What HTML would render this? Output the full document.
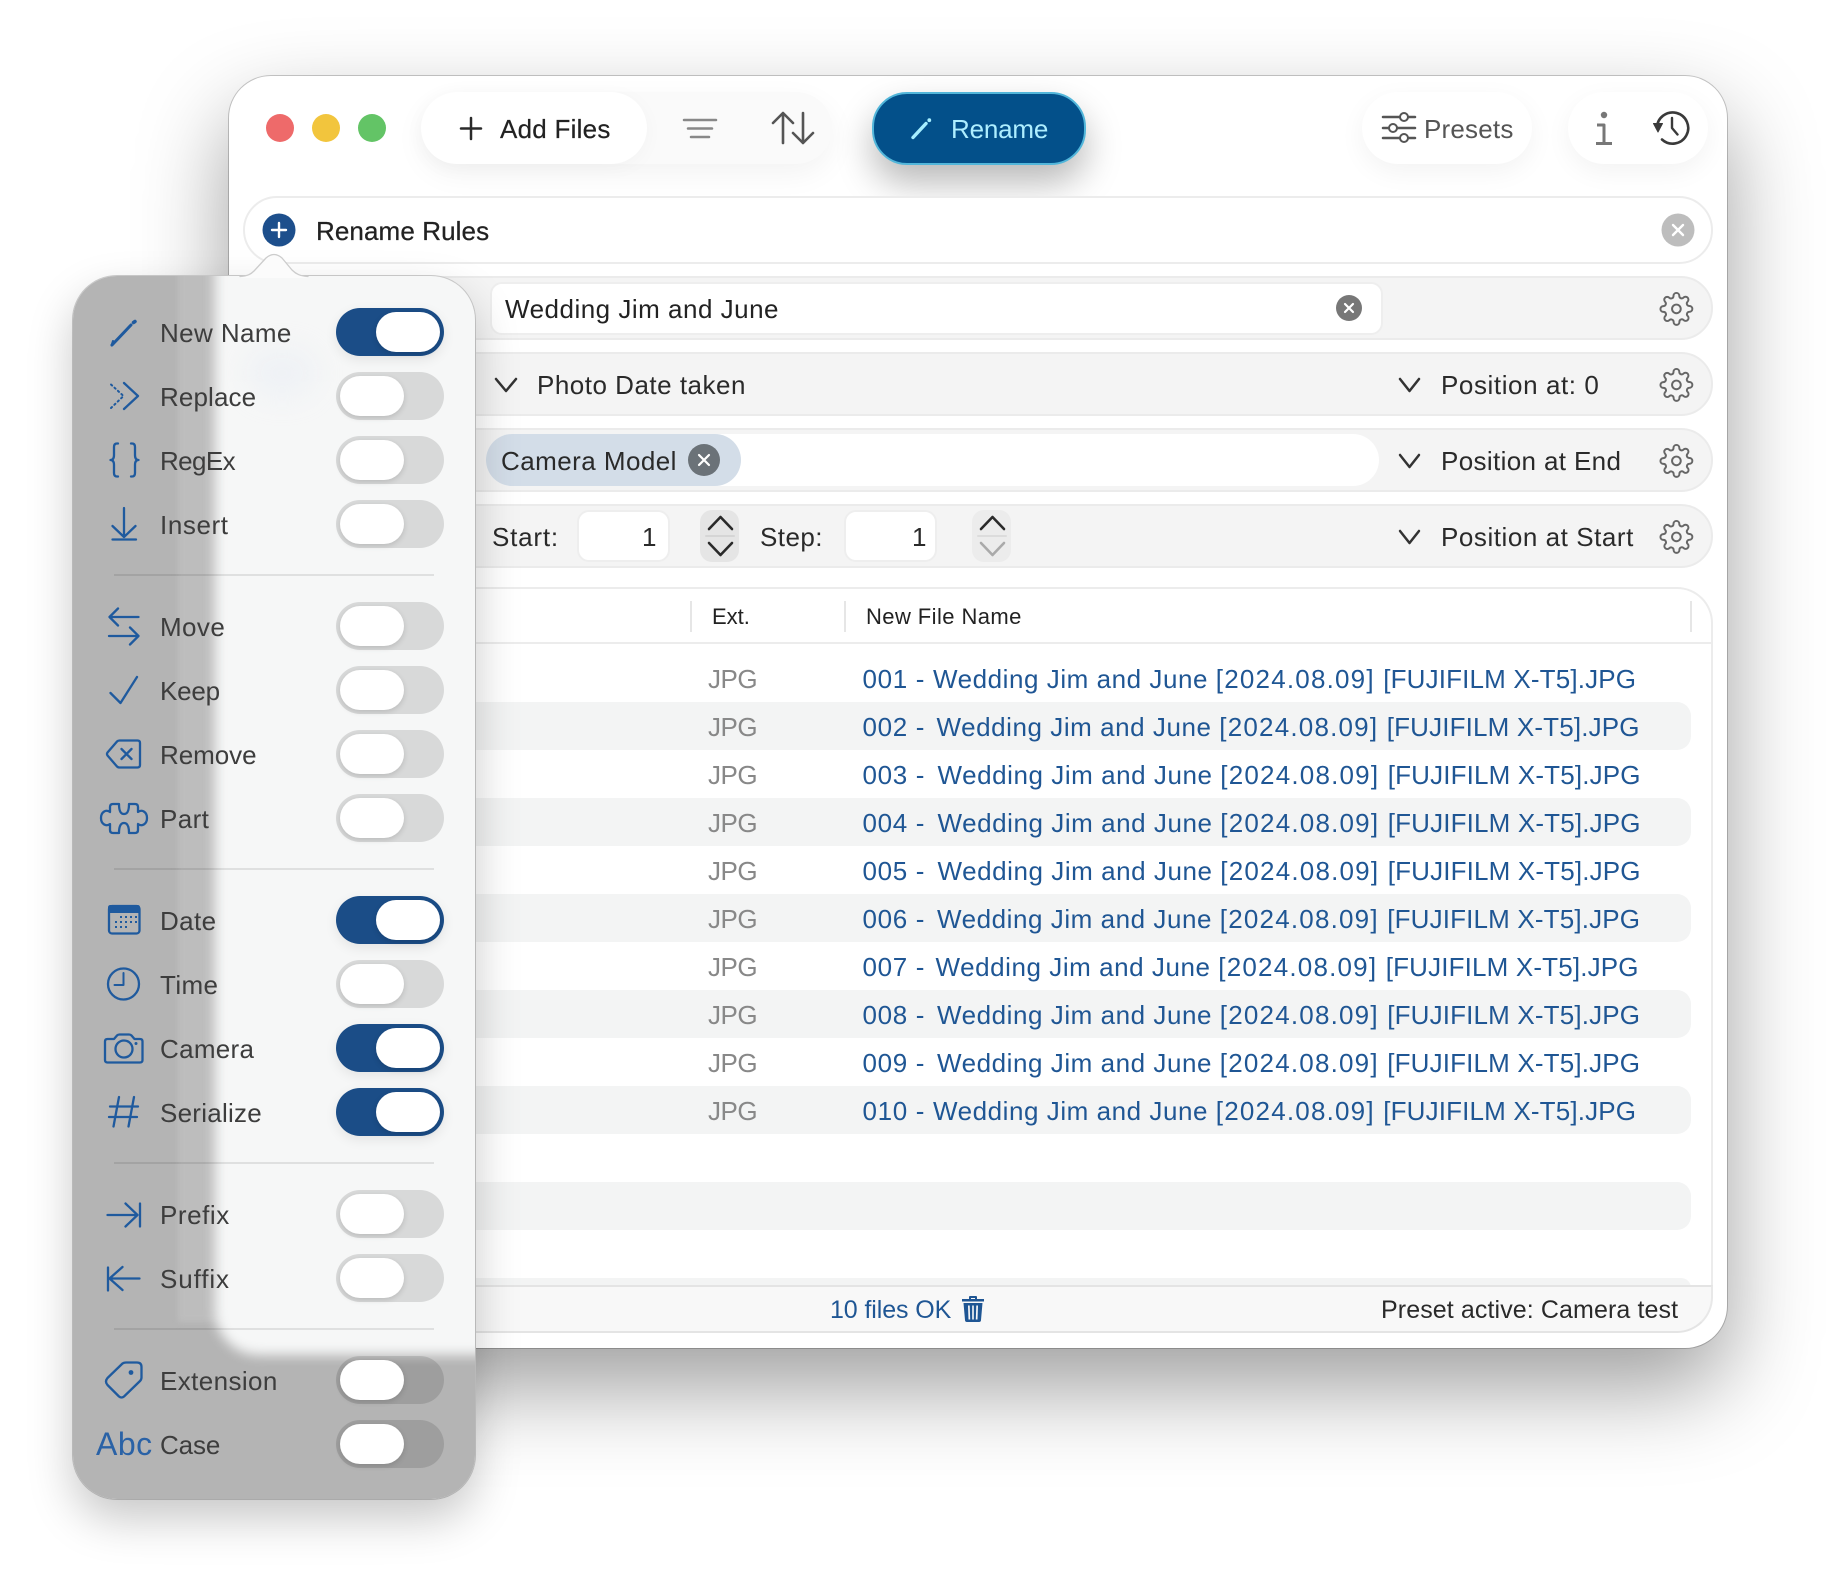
<!DOCTYPE html>
<html><head><meta charset="utf-8"><title>Rename</title>
<style>
html,body{margin:0;padding:0;background:#fff}
#p{position:relative;width:1840px;height:1580px;overflow:hidden;background:#fff;font-family:"Liberation Sans",sans-serif;font-size:26px;color:#222}
#p div,#p span.a{position:absolute}
.t{position:absolute;white-space:pre;height:40px;line-height:40px}
.row{left:243px;width:1466px;height:60px;background:#f4f4f4;border:2px solid #ebebeb;border-radius:32px}
.st{background:#f3f4f4;left:400px;width:1291px;height:48px;border-radius:14px}
.j{left:708px;color:#888;letter-spacing:-.5px}
.f{left:862.5px;color:#1f5694;letter-spacing:.66px}
.f i{font-style:normal;display:inline-block}
.f u{text-decoration:none;letter-spacing:.55px}
.f s{text-decoration:none;letter-spacing:1.2px}
.f em{font-style:normal;letter-spacing:.16px}
.lb{left:160px;color:#3d3d3d;letter-spacing:.12px}
.tg{left:336px;width:108px;height:48px;border-radius:24px;background:rgba(0,0,0,.12)}
.tg b{position:absolute;left:4px;top:4px;width:64px;height:40px;border-radius:20px;background:#fff;box-shadow:0 2px 6px rgba(0,0,0,.14)}
.tg.on{background:#1b4d87;box-shadow:0 4px 12px rgba(0,0,0,.08)}
.tg.on b{left:40px}
.sep{left:114px;width:320px;height:2px;background:rgba(0,0,0,.09)}
svg{position:absolute;left:0;top:0}
</style></head><body>
<div id="p">

<!-- window -->
<div style="left:229px;top:76px;width:1498px;height:1272px;background:#fff;border-radius:42px;box-shadow:0 0 0 1px rgba(0,0,0,.2),0 40px 90px rgba(0,0,0,.38)"></div>

<!-- toolbar -->
<div style="left:421px;top:92px;width:411px;height:72px;border-radius:36px;background:#fafafa;box-shadow:0 10px 30px rgba(0,0,0,.05)"></div>
<div style="left:421px;top:92px;width:226px;height:72px;border-radius:36px;background:#fff;box-shadow:0 4px 20px rgba(0,0,0,.03)"></div>
<div style="left:872px;top:92px;width:210px;height:69px;border-radius:35px;background:#03508a;border:2px solid #52b6da;box-shadow:0 18px 36px rgba(0,0,0,.28)"></div>
<div style="left:1362px;top:92px;width:170px;height:72px;border-radius:36px;background:#fff;box-shadow:0 8px 26px rgba(0,0,0,.05)"></div>
<div style="left:1568px;top:92px;width:140px;height:72px;border-radius:36px;background:#fff;box-shadow:0 8px 26px rgba(0,0,0,.05)"></div>

<div class="t" style="left:500px;top:109px;letter-spacing:.25px;color:#222;-webkit-text-stroke:.2px #222">Add Files</div>
<div class="t" style="left:951px;top:109px;color:#aeeeff;letter-spacing:-.2px">Rename</div>
<div class="t" style="left:1424px;top:109px;color:#555;letter-spacing:.2px">Presets</div>

<!-- rename rules bar -->
<div style="left:243px;top:196px;width:1466px;height:64px;background:#fff;border:2px solid #ececec;border-radius:34px"></div>
<div class="t" style="left:316px;top:211px;letter-spacing:.1px;color:#222;-webkit-text-stroke:.25px #222">Rename Rules</div>

<!-- rows -->
<div class="row" style="top:276px"></div>
<div class="row" style="top:352px"></div>
<div class="row" style="top:428px"></div>
<div class="row" style="top:504px"></div>

<div style="left:490px;top:282px;width:889px;height:49px;background:#fff;border:2px solid #eee;border-radius:12px"></div>
<div class="t" style="left:505px;top:289px;letter-spacing:.5px;color:#222">Wedding Jim and June</div>

<div class="t" style="left:537px;top:365px;letter-spacing:.5px;color:#2a2a2a">Photo Date taken</div>
<div class="t" style="left:1441px;top:365px;letter-spacing:.58px;color:#2a2a2a">Position at: 0</div>

<div style="left:486px;top:434px;width:893px;height:52px;background:#fff;border-radius:26px"></div>
<div style="left:486px;top:434px;width:255px;height:52px;background:#d3dde8;border-radius:26px"></div>
<div class="t" style="left:501px;top:441px;letter-spacing:.45px;color:#2a2a2a">Camera Model</div>
<div class="t" style="left:1441px;top:441px;letter-spacing:.36px;color:#2a2a2a">Position at End</div>

<div class="t" style="left:492px;top:517px;letter-spacing:.8px;color:#2a2a2a">Start:</div>
<div style="left:577px;top:510px;width:89px;height:48px;background:#fff;border:2px solid #eee;border-radius:12px"></div>
<div class="t" style="left:642px;top:517px;color:#2a2a2a">1</div>
<div style="left:700px;top:510px;width:39px;height:52px;background:#e5e5e5;border-radius:12px"></div>
<div class="t" style="left:760px;top:517px;letter-spacing:.45px;color:#2a2a2a">Step:</div>
<div style="left:844px;top:510px;width:89px;height:48px;background:#fff;border:2px solid #eee;border-radius:12px"></div>
<div class="t" style="left:912px;top:517px;color:#2a2a2a">1</div>
<div style="left:972px;top:510px;width:39px;height:52px;background:#ececec;border-radius:12px"></div>
<div class="t" style="left:1441px;top:517px;letter-spacing:.55px;color:#2a2a2a">Position at Start</div>

<!-- table -->
<div style="left:243px;top:587px;width:1466px;height:700px;background:#fff;border:2px solid #ececec;border-bottom:0;border-radius:36px 36px 0 0"></div>
<div style="left:245px;top:642px;width:1466px;height:2px;background:#ececec"></div>
<div style="left:690px;top:601px;width:2px;height:31px;background:#e6e6e6"></div>
<div style="left:844px;top:601px;width:2px;height:31px;background:#e6e6e6"></div>
<div style="left:1690px;top:601px;width:2px;height:31px;background:#e6e6e6"></div>
<div class="t" style="left:712px;top:597px;font-size:22px;color:#222">Ext.</div>
<div class="t" style="left:866px;top:597px;font-size:22px;letter-spacing:.42px;color:#222">New File Name</div>

<div class="st" style="top:702px"></div>
<div class="st" style="top:798px"></div>
<div class="st" style="top:894px"></div>
<div class="st" style="top:990px"></div>
<div class="st" style="top:1086px"></div>
<div class="st" style="top:1182px"></div>
<div class="st" style="top:1278px;height:10px;border-radius:14px 14px 0 0"></div>

<div class="t j" style="top:659px">JPG</div><div class="t f" style="top:659px"><i style="width:70.5px">001 - </i><u>Wedding Jim and June </u><s>[2024.08.09] </s><em>[FUJIFILM X-T5].JPG</em></div>
<div class="t j" style="top:707px">JPG</div><div class="t f" style="top:707px"><i style="width:74px">002 - </i><u>Wedding Jim and June </u><s>[2024.08.09] </s><em>[FUJIFILM X-T5].JPG</em></div>
<div class="t j" style="top:755px">JPG</div><div class="t f" style="top:755px"><i style="width:75px">003 - </i><u>Wedding Jim and June </u><s>[2024.08.09] </s><em>[FUJIFILM X-T5].JPG</em></div>
<div class="t j" style="top:803px">JPG</div><div class="t f" style="top:803px"><i style="width:75px">004 - </i><u>Wedding Jim and June </u><s>[2024.08.09] </s><em>[FUJIFILM X-T5].JPG</em></div>
<div class="t j" style="top:851px">JPG</div><div class="t f" style="top:851px"><i style="width:75px">005 - </i><u>Wedding Jim and June </u><s>[2024.08.09] </s><em>[FUJIFILM X-T5].JPG</em></div>
<div class="t j" style="top:899px">JPG</div><div class="t f" style="top:899px"><i style="width:74.5px">006 - </i><u>Wedding Jim and June </u><s>[2024.08.09] </s><em>[FUJIFILM X-T5].JPG</em></div>
<div class="t j" style="top:947px">JPG</div><div class="t f" style="top:947px"><i style="width:73px">007 - </i><u>Wedding Jim and June </u><s>[2024.08.09] </s><em>[FUJIFILM X-T5].JPG</em></div>
<div class="t j" style="top:995px">JPG</div><div class="t f" style="top:995px"><i style="width:74.5px">008 - </i><u>Wedding Jim and June </u><s>[2024.08.09] </s><em>[FUJIFILM X-T5].JPG</em></div>
<div class="t j" style="top:1043px">JPG</div><div class="t f" style="top:1043px"><i style="width:74.5px">009 - </i><u>Wedding Jim and June </u><s>[2024.08.09] </s><em>[FUJIFILM X-T5].JPG</em></div>
<div class="t j" style="top:1091px">JPG</div><div class="t f" style="top:1091px"><i style="width:70.5px">010 - </i><u>Wedding Jim and June </u><s>[2024.08.09] </s><em>[FUJIFILM X-T5].JPG</em></div>

<!-- status -->
<div style="left:243px;top:1285px;width:1468px;height:44px;background:#f8f8f8;border-top:2px solid #e4e4e4;border-bottom:2px solid #e4e4e4;border-right:2px solid #e8e8e8;border-radius:0 0 36px 0"></div>
<div class="t" style="left:830px;top:1290px;font-size:25px;color:#1f5694;letter-spacing:-.1px">10 files OK</div>
<div class="t" style="left:1381px;top:1290px;font-size:25px;color:#2a2a2a;letter-spacing:.1px">Preset active: Camera test</div>

<!-- window icons -->
<svg width="1840" height="1580" viewBox="0 0 1840 1580" fill="none" stroke-linecap="round" stroke-linejoin="round">
<defs>
<g id="gear" stroke="#666" stroke-width="1.35" fill="none">
<circle cx="12" cy="12" r="3"/>
<path d="M19.4 15a1.65 1.65 0 0 0 .33 1.82l.06.06a2 2 0 0 1 0 2.83 2 2 0 0 1-2.83 0l-.06-.06a1.65 1.65 0 0 0-1.82-.33 1.65 1.65 0 0 0-1 1.51V21a2 2 0 0 1-2 2 2 2 0 0 1-2-2v-.09A1.65 1.65 0 0 0 9 19.4a1.65 1.65 0 0 0-1.82.33l-.06.06a2 2 0 0 1-2.83 0 2 2 0 0 1 0-2.83l.06-.06a1.65 1.65 0 0 0 .33-1.82 1.65 1.65 0 0 0-1.51-1H3a2 2 0 0 1-2-2 2 2 0 0 1 2-2h.09A1.65 1.65 0 0 0 4.6 9a1.65 1.65 0 0 0-.33-1.82l-.06-.06a2 2 0 0 1 0-2.83 2 2 0 0 1 2.83 0l.06.06a1.65 1.65 0 0 0 1.82.33H9a1.65 1.65 0 0 0 1-1.51V3a2 2 0 0 1 2-2 2 2 0 0 1 2 2v.09a1.65 1.65 0 0 0 1 1.51 1.65 1.65 0 0 0 1.82-.33l.06-.06a2 2 0 0 1 2.83 0 2 2 0 0 1 0 2.83l-.06.06a1.65 1.65 0 0 0-.33 1.82V9a1.65 1.65 0 0 0 1.51 1H21a2 2 0 0 1 2 2 2 2 0 0 1-2 2h-.09a1.65 1.65 0 0 0-1.51 1z"/>
</g>
</defs>
<!-- traffic lights -->
<circle cx="280" cy="128" r="14" fill="#ee6a6a"/><circle cx="326" cy="128" r="14" fill="#f2c53d"/><circle cx="372" cy="128" r="14" fill="#63c466"/>
<!-- plus -->
<path d="M471 118V139M461 128.500H481" stroke="#2a2a2a" stroke-width="2.500"/>
<!-- filter -->
<path d="M684 120H716" stroke="#888" stroke-width="2.500"/><path d="M688 128.500H712" stroke="#888" stroke-width="2.500"/><path d="M691 137H709" stroke="#888" stroke-width="2.500"/>
<!-- sort -->
<path d="M783 113V143M773 123L783 113L793 123" stroke="#555" stroke-width="2.600"/>
<path d="M803 113V143M793 133L803 143L813 133" stroke="#555" stroke-width="2.600"/>
<!-- rename pencil -->
<path d="M913 137.500L926 123.500" stroke="#a6eeff" stroke-width="3.400"/><circle cx="929.300" cy="120.200" r="1.900" fill="#a6eeff"/>
<!-- sliders -->
<g stroke="#555" stroke-width="2.500"><path d="M1383 117H1415M1383 128H1415M1383 138H1415"/></g>
<g stroke="#555" stroke-width="2" fill="#fff"><circle cx="1404" cy="117" r="4"/><circle cx="1393" cy="128" r="4"/><circle cx="1404" cy="138" r="4"/></g>
<!-- info -->
<circle cx="1604" cy="115" r="3.200" fill="#777"/>
<path d="M1597 125H1604V143M1596 143.500H1612" stroke="#777" stroke-width="3" stroke-linecap="butt"/>
<!-- history -->
<path d="M1657 128A15.600 15.600 0 1 1 1662 139.500" stroke="#3a3a3a" stroke-width="2.600"/>
<path d="M1653.500 123.500L1662.500 123.500L1658 132Z" fill="#3a3a3a" stroke="#3a3a3a" stroke-width="1"/>
<path d="M1672 118V128L1677.500 134.500" stroke="#3a3a3a" stroke-width="2.400"/>
<!-- rules plus -->
<circle cx="279" cy="230" r="16.500" fill="#1d4f8c"/><path d="M279 223V237M272 230H286" stroke="#fff" stroke-width="2.400"/>
<!-- rules close -->
<circle cx="1678" cy="230" r="16.500" fill="#bdbdbd"/><path d="M1673 225L1683 235M1683 225L1673 235" stroke="#fff" stroke-width="2.400"/>
<!-- input close -->
<circle cx="1349" cy="308" r="13" fill="#777"/><path d="M1345 304L1353 312M1353 304L1345 312" stroke="#fff" stroke-width="2.200"/>
<!-- chip close -->
<circle cx="704" cy="460" r="16" fill="#6b7278"/><path d="M699 455L709 465M709 455L699 465" stroke="#fff" stroke-width="2.200"/>
<!-- chevrons -->
<g stroke="#333" stroke-width="2.500">
<path d="M496 379L506 391L516 379"/>
<path d="M1400 379L1409.500 391L1419 379"/>
<path d="M1400 455L1409.500 467L1419 455"/>
<path d="M1400 531L1409.500 543L1419 531"/>
</g>
<!-- gears -->
<use href="#gear" transform="translate(1659 291.500) scale(1.45)"/>
<use href="#gear" transform="translate(1659 367.500) scale(1.45)"/>
<use href="#gear" transform="translate(1659 443.500) scale(1.45)"/>
<use href="#gear" transform="translate(1659 519.500) scale(1.45)"/>
<!-- steppers -->
<path d="M709 529L720.500 517L732 529" stroke="#2a2a2a" stroke-width="2.600"/>
<path d="M706 536H734" stroke="#d5d5d5" stroke-width="2"/>
<path d="M709 543L720.500 555L732 543" stroke="#2a2a2a" stroke-width="2.600"/>
<path d="M981 529L992.500 517L1004 529" stroke="#2a2a2a" stroke-width="2.600"/>
<path d="M978 536H1006" stroke="#dcdcdc" stroke-width="2"/>
<path d="M981 543L992.500 555L1004 543" stroke="#aaa" stroke-width="2.600"/>
<!-- trash -->
<g fill="#1f5694" stroke="none">
<path d="M969 1299V1297Q969 1296 970 1296H976Q977 1296 977 1297V1299H984V1301.500H962V1299ZM971 1299H975V1298H971Z"/>
<path d="M963.500 1303H982.500L981 1320Q981 1322 979 1322H967Q965 1322 965 1320ZM968 1305.500L968.500 1319.500H970.200L969.700 1305.500ZM972.200 1305.500V1319.500H973.800V1305.500ZM976.300 1305.500L975.800 1319.500H977.500L978 1305.500Z" fill-rule="evenodd"/>
</g>
</svg>

<!-- popover -->
<div style="left:73px;top:276px;width:402px;height:1222.500px;border-radius:44px;box-shadow:0 20px 45px rgba(0,0,0,.22),0 0 0 1px #cfcfcf"></div>
<div style="left:73px;top:276px;width:402px;height:1222.500px;border-radius:44px;background:#b4b4b4;overflow:hidden">
  <div style="left:105px;top:-40px;width:60px;height:1086px;background:#bdbdbd;filter:blur(3px)"></div>
  <div style="left:142px;top:-60px;width:340px;height:1139px;background:#f6f7f7;border-radius:0 0 0 44px;filter:blur(6px)"></div>
  <div style="left:174px;top:72px;width:70px;height:50px;background:#dfe6f2;border-radius:30px;filter:blur(14px);opacity:.3"></div>
</div>
<svg width="1840" height="1580" viewBox="0 0 1840 1580" fill="none" stroke-linecap="round" stroke-linejoin="round">
<path d="M240 278C248 276 251 274 254 271L266 258Q274 251 282 258L292 270C296 274 300 276 308 278Z" fill="#fbfbfb"/>
<path d="M240 276.500C248 276 251 274 254 271L266 258Q274 251 282 258L292 270C296 274 300 276 308 276.500" stroke="#cccccc" stroke-width="1.300"/>
</svg>

<div class="t lb" style="top:313px;letter-spacing:.4px">New Name</div><div class="tg on" style="top:308px"><b></b></div>
<div class="t lb" style="top:377px">Replace</div><div class="tg" style="top:372px"><b></b></div>
<div class="t lb" style="top:441px;letter-spacing:-.6px">RegEx</div><div class="tg" style="top:436px"><b></b></div>
<div class="t lb" style="top:505px;letter-spacing:.6px">Insert</div><div class="tg" style="top:500px"><b></b></div>
<div class="sep" style="top:574px"></div>
<div class="t lb" style="top:607px;letter-spacing:.4px">Move</div><div class="tg" style="top:602px"><b></b></div>
<div class="t lb" style="top:671px;letter-spacing:-.2px">Keep</div><div class="tg" style="top:666px"><b></b></div>
<div class="t lb" style="top:735px;letter-spacing:-.05px">Remove</div><div class="tg" style="top:730px"><b></b></div>
<div class="t lb" style="top:799px;letter-spacing:.4px">Part</div><div class="tg" style="top:794px"><b></b></div>
<div class="sep" style="top:868px"></div>
<div class="t lb" style="top:901px;letter-spacing:.4px">Date</div><div class="tg on" style="top:896px"><b></b></div>
<div class="t lb" style="top:965px;letter-spacing:.4px">Time</div><div class="tg" style="top:960px"><b></b></div>
<div class="t lb" style="top:1029px;letter-spacing:.3px">Camera</div><div class="tg on" style="top:1024px"><b></b></div>
<div class="t lb" style="top:1093px;letter-spacing:.25px">Serialize</div><div class="tg on" style="top:1088px"><b></b></div>
<div class="sep" style="top:1162px"></div>
<div class="t lb" style="top:1195px;letter-spacing:.55px">Prefix</div><div class="tg" style="top:1190px"><b></b></div>
<div class="t lb" style="top:1259px;letter-spacing:.9px">Suffix</div><div class="tg" style="top:1254px"><b></b></div>
<div class="sep" style="top:1328px"></div>
<div class="t lb" style="top:1361px;letter-spacing:.4px">Extension</div><div class="tg" style="top:1356px"><b></b></div>
<div class="t lb" style="top:1425px;letter-spacing:-.1px">Case</div><div class="tg" style="top:1420px"><b></b></div>
<div class="t" style="left:96px;top:1424px;font-size:32px;color:#2a62a6;letter-spacing:.5px">Abc</div>

<!-- popover icons -->
<svg width="1840" height="1580" viewBox="0 0 1840 1580" fill="none" stroke="#1f5a9e" stroke-width="2.300" stroke-linecap="round" stroke-linejoin="round">
<!-- pencil -->
<path d="M112 345L131 325" stroke-width="3"/><path d="M133.500 322.500L135 321.500" stroke-width="3.500"/><path d="M111.500 345.500L113 341" stroke-width="2"/>
<!-- replace -->
<path d="M124 383L138 396L124 409"/>
<path d="M111 384.500L123.500 396L111 408" stroke-dasharray="1.500 3.200" stroke-width="2"/>
<!-- regex -->
<path d="M118 443.500H117Q114 443.500 114 447V455Q114 460 110.500 460Q114 460 114 465V473Q114 476.500 117 476.500H118"/>
<path d="M131 443.500H132Q135 443.500 135 447V455Q135 460 138.500 460Q135 460 135 465V473Q135 476.500 132 476.500H131"/>
<!-- insert -->
<path d="M124 508V536M112.500 526L124 537L135.500 526"/><path d="M112.500 539.500H136"/>
<!-- move -->
<path d="M109.500 617H138.500M118 608.500L109.500 617L118 625.500"/>
<path d="M109 636H138.500M130 627.500L138.500 636L130 644.500"/>
<!-- keep -->
<path d="M110.500 693L120.500 703L137 677"/>
<!-- remove -->
<path d="M107.500 752.500L117 741.500Q118 740.500 119.500 740.500H137.500Q140 740.500 140 743V765Q140 767.500 137.500 767.500H119.500Q118 767.500 117 766.500L107.500 755.500Q106.500 754 107.500 752.500Z"/>
<path d="M121.500 749L131.500 759M131.500 749L121.500 759"/>
<!-- part -->
<path transform="translate(1 0)" d="M112 804H118C118 812 120 814 123 814C126 814 128 812 128 804H134Q137 804 137 807V812C141 809 146 812 146 818C146 824 141 827 137 824V830Q137 833 134 833H128C128 826 126 823 123 823C120 823 118 826 118 833H112Q109 833 109 830V824C105 827 100 824 100 818C100 812 105 809 109 812V807Q109 804 112 804Z"/>
<!-- date -->
<rect x="109" y="906" width="30.500" height="27.500" rx="3"/>
<path d="M108 913V907.500Q108 905 110.500 905H137.500Q140 905 140 907.500V913Z" fill="#1f5a9e" stroke="none"/>
<g fill="#1f5a9e" stroke="none">
<rect x="120" y="916" width="2" height="2"/><rect x="125" y="916" width="2" height="2"/><rect x="130" y="916" width="2" height="2"/><rect x="135" y="916" width="2" height="2"/>
<rect x="115" y="921" width="2" height="2"/><rect x="120" y="921" width="2" height="2"/><rect x="125" y="921" width="2" height="2"/><rect x="130" y="921" width="2" height="2"/><rect x="135" y="921" width="2" height="2"/>
<rect x="115" y="926" width="2" height="2"/><rect x="120" y="926" width="2" height="2"/><rect x="125" y="926" width="2" height="2"/>
</g>
<!-- time -->
<circle cx="123.500" cy="984" r="15.500"/><path d="M123.500 973V985H114.500" stroke-width="2"/>
<!-- camera -->
<path d="M107.500 1039H114L117 1035.500Q118 1034.500 119.500 1034.500H129Q130.500 1034.500 131.500 1035.500L134.500 1039H140Q142.500 1039 142.500 1041.500V1060Q142.500 1062.500 140 1062.500H107.500Q105 1062.500 105 1060V1041.500Q105 1039 107.500 1039Z"/>
<circle cx="124" cy="1049" r="8.500"/><circle cx="136" cy="1043.500" r="1.500" fill="#1f5a9e" stroke="none"/>
<!-- serialize -->
<path d="M119 1097L113.500 1126.500M134 1097L128.500 1126.500M110 1106.500H138M109 1117H137"/>
<!-- prefix -->
<path d="M107.500 1215H137.500M125.500 1203.500L137.500 1215L125.500 1226.500"/><path d="M140 1203.500V1226.500"/>
<!-- suffix -->
<path d="M108 1267.500V1290.500"/><path d="M139.500 1278.500H109.500M122.500 1267L109.500 1278.500L122.500 1290"/>
<!-- tag -->
<path d="M107.500 1378L122.500 1363.500Q124 1362.500 126 1362.500H137Q141.500 1362.500 141.500 1367V1377.500Q141.500 1379.500 140 1381L124 1396.500Q121.500 1398.500 119 1396.500L107.500 1385Q104.500 1381.500 107.500 1378Z"/>
<circle cx="131" cy="1372.500" r="2.400" fill="#1f5a9e" stroke="none"/>
</svg>

</div>
</body></html>
